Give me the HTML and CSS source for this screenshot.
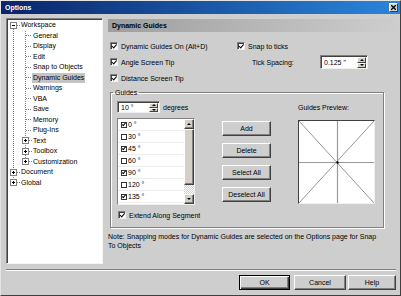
FILE: index.html
```html
<!DOCTYPE html>
<html lang="en">
<head>
    <meta charset="UTF-8">
    <meta name="viewport" content="width=device-width, initial-scale=1.0">
    <title>Options</title>
    <link rel="stylesheet" href="styles.css">
</head>
<body>
    <div class="window">
        <!-- Title bar -->
        <div class="titlebar">
            <span class="title">Options</span>
            <span class="close">
                <svg width="5" height="5" viewBox="0 0 5 5"><path d="M0 0L5 5M5 0L0 5" stroke="#000" stroke-width="1.3"/></svg>
            </span>
        </div>

        <div class="body">
            <!-- Category tree -->
            <div class="tree">
                <div class="root">
                    <div class="row"><span class="box"></span><i class="dash short"></i><span class="label">Workspace</span></div>
                    <div class="children">
                        <div class="row"><i class="dash"></i><span class="label">General</span></div>
                        <div class="row"><i class="dash"></i><span class="label">Display</span></div>
                        <div class="row"><i class="dash"></i><span class="label">Edit</span></div>
                        <div class="row"><i class="dash"></i><span class="label">Snap to Objects</span></div>
                        <div class="row"><i class="dash"></i><span class="label selected">Dynamic Guides</span></div>
                        <div class="row"><i class="dash"></i><span class="label">Warnings</span></div>
                        <div class="row"><i class="dash"></i><span class="label">VBA</span></div>
                        <div class="row"><i class="dash"></i><span class="label">Save</span></div>
                        <div class="row"><i class="dash"></i><span class="label">Memory</span></div>
                        <div class="row"><i class="dash"></i><span class="label">Plug-Ins</span></div>
                        <div class="row sub"><span class="box plus"></span><i class="dash short"></i><span class="label">Text</span></div>
                        <div class="row sub"><span class="box plus"></span><i class="dash short"></i><span class="label">Toolbox</span></div>
                        <div class="row sub"><span class="box plus"></span><i class="dash short"></i><span class="label">Customization</span></div>
                    </div>
                    <div class="row"><span class="box plus"></span><i class="dash short"></i><span class="label">Document</span></div>
                    <div class="row"><span class="box plus"></span><i class="dash short"></i><span class="label">Global</span></div>
                </div>
            </div>

            <!-- Settings page -->
            <div class="page">
                <div class="page-head">Dynamic Guides</div>

                <div class="options">
                    <label class="check"><span class="cb on"></span>Dynamic Guides On (Alt+D)</label>
                    <label class="check"><span class="cb on"></span>Snap to ticks</label>
                    <label class="check"><span class="cb on"></span>Angle Screen Tip</label>
                    <div class="tick">
                        <span class="tick-label">Tick Spacing:</span>
                        <div class="spin tick-spin">
                            <span class="val">0.125 "</span>
                            <span class="arrows"><i class="up"></i><i class="down"></i></span>
                        </div>
                    </div>
                    <label class="check"><span class="cb on"></span>Distance Screen Tip</label>
                </div>

                <fieldset class="group">
                    <legend>Guides</legend>
                    <div class="group-row">
                        <div class="list-col">
                            <div class="deg-row">
                                <div class="spin deg-spin">
                                    <span class="val">10 °</span>
                                    <span class="arrows"><i class="up"></i><i class="down"></i></span>
                                </div>
                                <span class="deg-text">degrees</span>
                            </div>
                            <div class="list">
                                <div class="list-rows">
                                    <div class="item"><span class="mini on"></span>0 °</div>
                                    <div class="item"><span class="mini"></span>30 °</div>
                                    <div class="item"><span class="mini on"></span>45 °</div>
                                    <div class="item"><span class="mini"></span>60 °</div>
                                    <div class="item"><span class="mini on"></span>90 °</div>
                                    <div class="item"><span class="mini"></span>120 °</div>
                                    <div class="item"><span class="mini on"></span>135 °</div>
                                </div>
                                <div class="scrollbar">
                                    <span class="sb-btn up"></span>
                                    <span class="sb-thumb"></span>
                                    <span class="sb-track"></span>
                                    <span class="sb-btn down"></span>
                                </div>
                            </div>
                        </div>

                        <div class="actions">
                            <button class="btn">Add</button>
                            <button class="btn">Delete</button>
                            <button class="btn">Select All</button>
                            <button class="btn">Deselect All</button>
                        </div>

                        <div class="preview-col">
                            <div class="preview-label">Guides Preview:</div>
                            <div class="preview">
                                <svg width="75" height="82" viewBox="0 0 75 82">
                                    <line x1="0" y1="0" x2="75" y2="82" stroke="#8a8a8a" stroke-width="0.9"/>
                                    <line x1="75" y1="0" x2="0" y2="82" stroke="#8a8a8a" stroke-width="0.9"/>
                                    <line x1="38.5" y1="0" x2="38.5" y2="82" stroke="#9a9a9a" stroke-width="1.2"/>
                                    <line x1="0" y1="41.5" x2="75" y2="41.5" stroke="#9a9a9a" stroke-width="1.2"/>
                                    <circle cx="38.5" cy="41.5" r="1.2" fill="#000"/>
                                </svg>
                            </div>
                        </div>
                    </div>
                    <label class="check extend"><span class="cb on"></span>Extend Along Segment</label>
                </fieldset>

                <p class="note">Note: Snapping modes for Dynamic Guides are selected on the Options page for Snap To Objects</p>
            </div>
        </div>

        <!-- Dialog buttons -->
        <div class="footer">
            <div class="separator"></div>
            <div class="buttons">
                <button class="btn default">OK</button>
                <button class="btn cancel">Cancel</button>
                <button class="btn help">Help</button>
            </div>
        </div>
    </div>
</body>
</html>
```

FILE: styles.css
```css
/* General styles */
body {
    margin: 0;
    font-family: "Liberation Sans", Arial, sans-serif;
    font-size: 7px;
    color: #000;
    background: #fff;
}
.window {
    width: 399px;
    height: 294px;
    background: #cecece;
    border: 1px solid;
    border-color: #e4e4e4 #404040 #404040 #e4e4e4;
    display: flex;
    flex-direction: column;
}

/* Title bar */
.titlebar {
    height: 13px;
    display: flex;
    align-items: center;
    justify-content: space-between;
    background: linear-gradient(to right, #0a246a, #2a86dc);
    color: #fff;
}
.title {
    font-weight: bold;
    padding-left: 4px;
}
.close {
    width: 9px;
    height: 9px;
    margin-right: 2px;
    box-sizing: border-box;
    display: flex;
    align-items: center;
    justify-content: center;
    background: #d4d0c8;
    border: 1px solid;
    border-color: #fff #404040 #404040 #fff;
}
.close svg {
    display: block;
}

.body {
    display: flex;
    padding: 4px 4px 0 5px;
}

/* Tree */
.tree {
    width: 97px;
    height: 246px;
    box-sizing: border-box;
    padding: 1px 0 0 1px;
    background: #fff;
    border: 1px solid;
    border-color: #808080 #f4f4f4 #f4f4f4 #808080;
    box-shadow: inset 1px 1px 0 #404040;
}
.root {
    background: repeating-linear-gradient(#808080 0 1px, transparent 1px 2px) no-repeat 5px 5px / 1px calc(100% - 10px);
}
.children {
    background: repeating-linear-gradient(#808080 0 1px, transparent 1px 2px) no-repeat 17px 0 / 1px calc(100% - 5px);
}
.row {
    display: flex;
    align-items: center;
    height: 10.5px;
    white-space: nowrap;
}
.box {
    position: relative;
    width: 7px;
    height: 7px;
    margin-left: 2px;
    box-sizing: border-box;
    border: 1px solid #808080;
    background: #fff;
}
.box::before {
    content: "";
    position: absolute;
    left: 1px;
    top: 2px;
    width: 3px;
    height: 1px;
    background: #000;
}
.box.plus::after {
    content: "";
    position: absolute;
    left: 2px;
    top: 1px;
    width: 1px;
    height: 3px;
    background: #000;
}
.row.sub .box {
    margin-left: 14px;
}
.dash {
    width: 6px;
    height: 1px;
    margin-left: 18px;
    margin-right: 1px;
    background: repeating-linear-gradient(to right, #808080 0 1px, transparent 1px 2px);
}
.dash.short {
    width: 3px;
    margin-left: 0;
}
.label {
    line-height: 10px;
}
.label.selected {
    background: #c4c4c4;
    margin-left: -1px;
    padding: 0 1px;
}

/* Page */
.page {
    flex: 1;
    margin: 1px 0 0 5px;
}
.page-head {
    height: 13px;
    line-height: 13px;
    padding-left: 4px;
    font-weight: bold;
    background: linear-gradient(to right, #9e9e9e, #cdcdcd);
}
.options {
    display: grid;
    grid-template-columns: 127px 1fr;
    grid-auto-rows: 16px;
    margin-top: 6px;
    padding-left: 2px;
}
.check {
    display: flex;
    align-items: center;
    gap: 3px;
    white-space: nowrap;
}
.cb {
    position: relative;
    width: 8px;
    height: 8px;
    box-sizing: border-box;
    background: #fff;
    border: 1px solid;
    border-color: #808080 #f0f0f0 #f0f0f0 #808080;
    box-shadow: inset 1px 1px 0 #404040;
}
.cb.on::after {
    content: "";
    position: absolute;
    left: 2px;
    top: 0;
    width: 1.5px;
    height: 3.5px;
    border: solid #000;
    border-width: 0 1.5px 1.5px 0;
    transform: rotate(40deg);
}
.tick {
    display: flex;
    align-items: center;
    padding-left: 15px;
}
.tick-label {
    width: 68px;
}

/* Spin boxes */
.spin {
    display: flex;
    box-sizing: border-box;
    background: #fff;
    border: 1px solid;
    border-color: #808080 #f0f0f0 #f0f0f0 #808080;
    box-shadow: inset 1px 1px 0 #404040;
}
.tick-spin {
    width: 48px;
    height: 14px;
}
.deg-spin {
    width: 43px;
    height: 12px;
}
.spin .val {
    flex: 1;
    padding-left: 3px;
    align-self: center;
}
.arrows {
    display: flex;
    flex-direction: column;
    width: 9px;
    margin: 1px 1px 0 0;
}
.arrows i,
.sb-btn {
    position: relative;
    flex: 1;
    box-sizing: border-box;
    background: #d4d0c8;
    border: 1px solid;
    border-color: #fff #404040 #404040 #fff;
}
.arrows i::before,
.sb-btn::before {
    content: "";
    position: absolute;
    left: 50%;
    top: 50%;
    margin: -1px 0 0 -2px;
    border-left: 2px solid transparent;
    border-right: 2px solid transparent;
}
.arrows .up::before,
.sb-btn.up::before {
    border-bottom: 2px solid #000;
}
.arrows .down::before,
.sb-btn.down::before {
    border-top: 2px solid #000;
}

/* Guides group */
.group {
    margin: 2px 12px 0 2px;
    padding: 0 0 8px 6px;
    min-width: 0;
    border: 1px solid #808080;
    box-shadow: 1px 1px 0 #fff, inset 1px 1px 0 #fff;
}
.group legend {
    padding: 0 2px;
    margin-left: -4px;
    line-height: 9px;
}
.group-row {
    display: flex;
    align-items: flex-start;
    margin-top: 4px;
}
.list-col {
    width: 78px;
}
.deg-row {
    display: flex;
    align-items: center;
    height: 12px;
}
.deg-text {
    margin-left: 3px;
}
.list {
    display: flex;
    height: 87px;
    margin-top: 5px;
    box-sizing: border-box;
    background: #fff;
    border: 1px solid;
    border-color: #808080 #f0f0f0 #f0f0f0 #808080;
}
.list-rows {
    flex: 1;
    overflow: hidden;
}
.item {
    display: flex;
    align-items: center;
    height: 12px;
    padding-left: 3px;
    box-sizing: border-box;
    border-bottom: 1px solid #ececec;
}
.mini {
    position: relative;
    width: 6px;
    height: 6px;
    margin-right: 1px;
    box-sizing: border-box;
    border: 1px solid #333;
    background: #fff;
}
.mini.on::after {
    content: "";
    position: absolute;
    left: 1px;
    top: -1px;
    width: 1px;
    height: 3px;
    border: solid #000;
    border-width: 0 1px 1px 0;
    transform: rotate(40deg);
}
.scrollbar {
    display: flex;
    flex-direction: column;
    width: 10px;
}
.sb-btn {
    flex: 0 0 10px;
    box-shadow: inset -1px -1px 0 #808080;
}
.sb-thumb {
    height: 56px;
    box-sizing: border-box;
    background: #d4d0c8;
    border: 1px solid;
    border-color: #fff #404040 #404040 #fff;
    box-shadow: inset -1px -1px 0 #808080;
}
.sb-track {
    flex: 1;
    background: repeating-conic-gradient(#fff 0 25%, #d4d0c8 0 50%) 0 0 / 2px 2px;
}
.actions {
    display: flex;
    flex-direction: column;
    gap: 7px;
    width: 49px;
    margin-left: 27px;
    padding-top: 20px;
}
.btn {
    height: 15px;
    padding: 0;
    box-sizing: border-box;
    font: inherit;
    color: #000;
    background: #cecece;
    border: 1px solid;
    border-color: #fff #404040 #404040 #fff;
    box-shadow: inset -1px -1px 0 #808080;
}
.preview-col {
    width: 77px;
    margin-left: 27px;
}
.preview-label {
    line-height: 10px;
    margin-top: 2px;
}
.preview {
    width: 77px;
    height: 84px;
    margin-top: 7px;
    box-sizing: border-box;
    background: #fff;
    border: 1px solid;
    border-color: #404040 #f0f0f0 #f0f0f0 #404040;
}
.preview svg {
    display: block;
}
.check.extend {
    margin-top: 6px;
    padding-left: 1px;
    height: 8px;
}
.note {
    margin: 4px 0 0;
    max-width: 274px;
    line-height: 9px;
}

/* Footer */
.separator {
    height: 0;
    margin: 5px 4px 0 5px;
    border-top: 1px solid #808080;
    border-bottom: 1px solid #fff;
}
.buttons {
    display: flex;
    justify-content: flex-end;
    margin-top: 4px;
    padding-right: 4px;
}
.buttons .btn {
    width: 51px;
}
.buttons .default {
    border: 1px solid #000;
    box-shadow: inset 1px 1px 0 #fff, inset -1px -1px 0 #404040, inset -2px -2px 0 #808080;
}
.buttons .cancel {
    width: 52px;
    margin-left: 4px;
}
.buttons .help {
    width: 48px;
    margin-left: 2px;
}
```
